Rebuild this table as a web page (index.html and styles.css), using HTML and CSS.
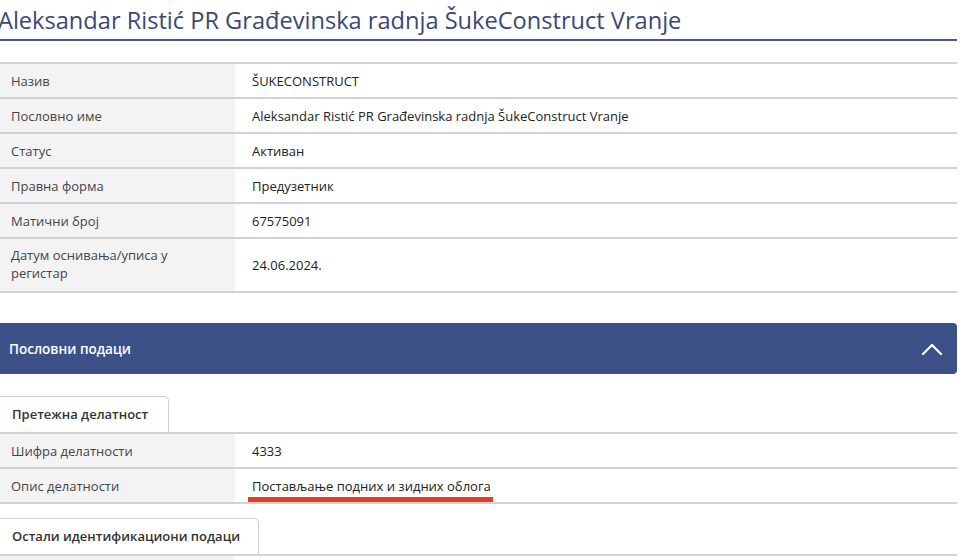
FILE: index.html
```html
<!DOCTYPE html>
<html lang="sr">
<head>
<meta charset="utf-8">
<link rel="stylesheet" href="styles.css">
</head>
<body>
<div class="page">
  <h1 class="title">Aleksandar Ristić PR Građevinska radnja ŠukeConstruct Vranje</h1>

  <div class="table first">
    <div class="row"><div class="label">Назив</div><div class="value">ŠUKECONSTRUCT</div></div>
    <div class="row"><div class="label">Пословно име</div><div class="value">Aleksandar Ristić PR Građevinska radnja ŠukeConstruct Vranje</div></div>
    <div class="row"><div class="label">Статус</div><div class="value">Активан</div></div>
    <div class="row"><div class="label">Правна форма</div><div class="value">Предузетник</div></div>
    <div class="row"><div class="label">Матични број</div><div class="value">67575091</div></div>
    <div class="row tall"><div class="label">Датум оснивања/уписа у<br>регистар</div><div class="value">24.06.2024.</div></div>
  </div>

  <div class="panel-bar">
    <span class="panel-title">Пословни подаци</span>
    <svg class="chevron" width="22" height="14" viewBox="0 0 22 14"><path d="M2 12 L11 3 L20 12" fill="none" stroke="#fff" stroke-width="2.2" stroke-linecap="round" stroke-linejoin="round"/></svg>
  </div>

  <div class="tab tab-a">Претежна делатност</div>
  <div class="table">
    <div class="row"><div class="label">Шифра делатности</div><div class="value">4333</div></div>
    <div class="row"><div class="label">Опис делатности</div><div class="value"><span class="marked">Постављање подних и зидних облога</span></div></div>
  </div>

  <div class="tab tab-b">Остали идентификациони подаци</div>
  <div class="table">
    <div class="row"><div class="label">&nbsp;</div><div class="value">&nbsp;</div></div>
  </div>
</div>
</body>
</html>
```

FILE: styles.css
```css
html, body {
  margin: 0;
  padding: 0;
  background: #ffffff;
}
.page {
  width: 957px;
  height: 560px;
  font-family: "Open Sans", "Noto Sans", sans-serif;
  color: #2b2b2b;
  overflow: hidden;
}
.title {
  margin: 0 0 0 -2px;
  padding: 4px 0 3px 0;
  font-size: 23.6px;
  font-weight: 400;
  line-height: 32px;
  color: #3a4878;
  border-bottom: 2px solid #4a5887;
  white-space: nowrap;
}
.table {
  border-top: 2px solid #d2d2d2;
}
.table.first {
  margin-top: 21px;
}
.row {
  display: flex;
  border-bottom: 2px solid #d2d2d2;
  font-size: 13px;
  line-height: 18px;
}
.label {
  width: 224px;
  flex: none;
  padding: 7.5px 0 7.5px 11px;
  background: #f3f3f3;
  color: #454545;
}
.value {
  flex: 1;
  padding: 7.5px 0 7.5px 17px;
  display: flex;
  align-items: center;
  color: #222;
}
.row.tall .label {
  padding-top: 7px;
  padding-bottom: 9px;
}
.panel-bar {
  margin-top: 30px;
  height: 51px;
  background: #3d5189;
  border-radius: 0 4px 4px 0;
  display: flex;
  align-items: center;
  justify-content: space-between;
  padding: 0 14px 0 9px;
}
.panel-title {
  color: #ffffff;
  font-size: 13.5px;
  font-weight: 600;
}
.chevron {
  display: block;
}
.tab {
  display: inline-block;
  box-sizing: border-box;
  height: 36px;
  line-height: 34px;
  padding: 0 0 0 12px;
  border: 1px solid #cfcfcf;
  border-bottom: none;
  border-left: none;
  border-radius: 0 5px 0 0;
  font-size: 13px;
  font-weight: 600;
  color: #333;
  vertical-align: top;
  white-space: nowrap;
}
.tab-a {
  margin-top: 22px;
  width: 169px;
}
.tab-b {
  margin-top: 14px;
  width: 259px;
}
.marked {
  position: relative;
  display: inline-block;
}
.marked::after {
  content: "";
  position: absolute;
  left: -4px;
  right: -2px;
  bottom: -7px;
  height: 5px;
  background: #e23b26;
}
```
